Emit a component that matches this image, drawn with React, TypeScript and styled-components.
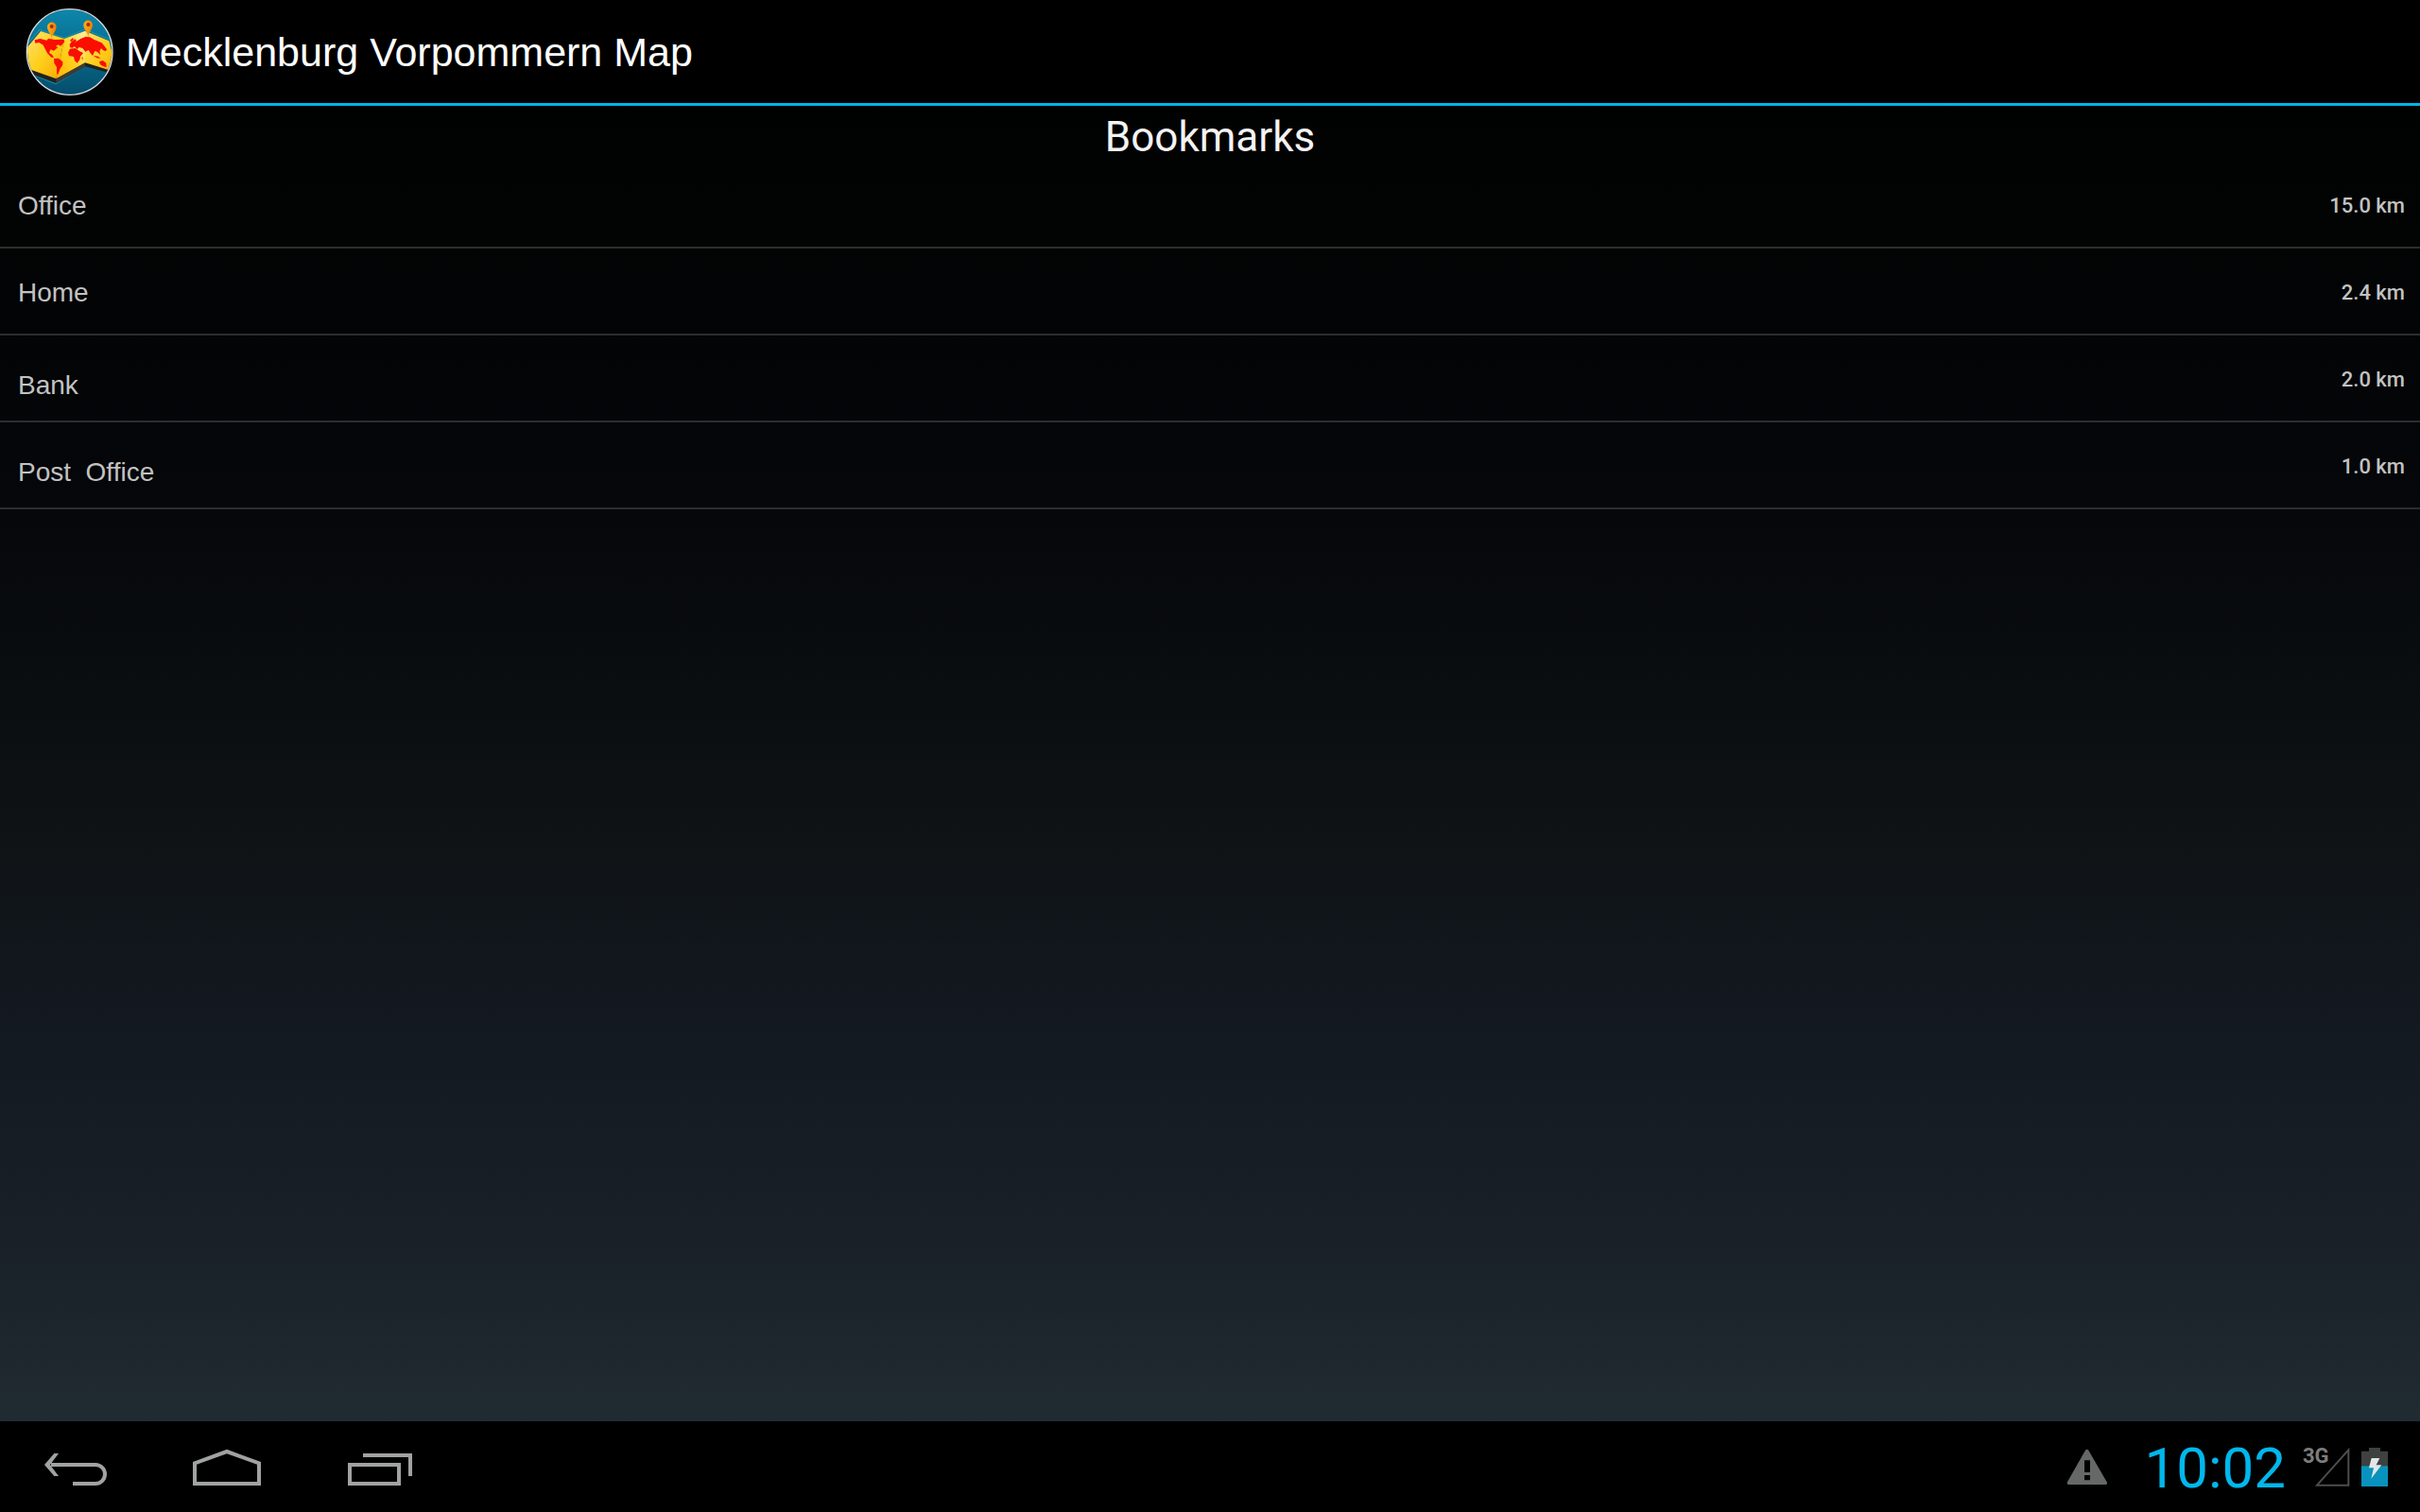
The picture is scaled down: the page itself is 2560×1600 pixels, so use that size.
import React from "react";
import styled, { createGlobalStyle } from "styled-components";

const GlobalStyle = createGlobalStyle`
  * { box-sizing: border-box; }
  body { margin: 0; background: #000; }
  button { border: 0; margin: 0; padding: 0; background: none; color: inherit; font: inherit; cursor: pointer; }
  svg { display: block; flex: none; }
`;

const Screen = styled.div`
  display: flex;
  flex-direction: column;
  min-height: 100vh;
  color: #c2c2c2;
  font-family: Roboto, "Liberation Sans", sans-serif;
  background: linear-gradient(
    #000000 0%, #020303 15%, #040609 31%, #0e1214 54%,
    #12171e 64%, #181f26 80%, #212b32 94%
  );
`;

const ActionBar = styled.header`
  display: flex;
  align-items: center;
  gap: 12px;
  height: 112px;
  padding: 0 27px;
  background: #000;
  border-bottom: 3px solid #00b4ea;
`;

const AppTitle = styled.h1`
  margin: 0;
  color: #fff;
  font: 400 43px/52px "Liberation Sans", Arial, sans-serif;
`;

const Content = styled.main`
  flex: 1;
`;

const Heading = styled.h2`
  margin: 0;
  padding-top: 7px;
  color: #f3f3f3;
  font-size: 44px;
  font-weight: 400;
  line-height: 52px;
  text-align: center;
`;

const List = styled.ul`
  margin: 0;
  padding: 0;
  list-style: none;
`;

const Row = styled.button`
  display: flex;
  justify-content: space-between;
  align-items: center;
  width: 100%;
  height: 92px;
  padding: 0 16px 0 19px;
  border-bottom: 2px solid #2c2d2e;
`;

const Name = styled.span<{ $low: boolean }>`
  padding-top: ${(p) => (p.$low ? 16 : 4)}px;
  font: 400 28px/32px "Liberation Sans", Arial, sans-serif;
  white-space: pre;
`;

const Distance = styled.span`
  padding-top: 4px;
  font-size: 22px;
  font-weight: 500;
  line-height: 26px;
`;

const SystemBar = styled.footer`
  display: flex;
  justify-content: space-between;
  align-items: center;
  height: 96px;
  padding-right: 34px;
  background: #000;
`;

const Group = styled.div`
  display: flex;
  align-items: center;
`;

const NavButton = styled.button`
  width: 160px;
  height: 96px;
`;

const Clock = styled.time`
  margin: 0 18px 0 40px;
  padding-top: 4px;
  color: #00b7ec;
  font-size: 60px;
  line-height: 72px;
`;

const Signal = styled.div`
  position: relative;
  display: flex;
  justify-content: flex-end;
  width: 50px;
  margin-right: 12px;
`;

const Network = styled.span`
  position: absolute;
  left: 0;
  top: 0;
  color: #7d7d7d;
  font-size: 22px;
  font-weight: 700;
  line-height: 20px;
`;

const bookmarks = [
  { name: "Office", distance: "15.0 km", low: false },
  { name: "Home", distance: "2.4 km", low: false },
  { name: "Bank", distance: "2.0 km", low: true },
  { name: "Post  Office", distance: "1.0 km", low: true },
];

const Logo = () => (
  <svg width="94" height="94" viewBox="78 25 282 282" aria-hidden="true">
    <defs>
      <linearGradient id="sea" x1="0" y1="0" x2="0" y2="1">
        <stop offset="0" stopColor="#0d87ab" />
        <stop offset=".5" stopColor="#086a8c" />
        <stop offset="1" stopColor="#044d6c" />
      </linearGradient>
      <linearGradient id="foldA" x1="0" y1="0" x2="1" y2="1">
        <stop offset="0" stopColor="#ffe27a" />
        <stop offset=".5" stopColor="#ffd01c" />
        <stop offset="1" stopColor="#f5a800" />
      </linearGradient>
      <linearGradient id="foldB" x1="0" y1="1" x2="1" y2="0">
        <stop offset="0" stopColor="#ffb400" />
        <stop offset=".5" stopColor="#ffd21e" />
        <stop offset="1" stopColor="#fff0a8" />
      </linearGradient>
      <linearGradient id="pin" x1="0" y1="0" x2="1" y2="0">
        <stop offset="0" stopColor="#ffb01c" />
        <stop offset="1" stopColor="#ee7d00" />
      </linearGradient>
      <clipPath id="disc"><circle cx="218" cy="166" r="134" /></clipPath>
    </defs>
    <circle cx="218" cy="166" r="135" fill="url(#sea)" />
    <g clipPath="url(#disc)">
      <path d="M76 152 123 97 201 122 267 96 345 128 372 236 267 208 174 266 76 226Z" fill="#16353f" stroke="#18a3bd" strokeWidth="6" strokeOpacity=".6" />
      <path d="M76 214 175 252V265L76 228ZM175 252 267 200V212L175 265ZM267 200 360 225V237L267 212Z" fill="#22211f" />
      <path d="M175 252 267 200V212L175 265Z" fill="#3d3a36" />
      <path d="M76 160 126 100 201 124 175 251 76 216Z" fill="url(#foldA)" />
      <path d="M201 124 267 99V200L175 251Z" fill="url(#foldB)" />
      <path d="M267 99 343 131 370 232 267 200Z" fill="url(#foldA)" />
      <path d="M107 128 124 124 146 129 150 123 171 127 199 126 202 134 190 147 181 143 174 148 181 151 168 162 158 158 153 169 162 174 168 184 160 183 147 170 141 158 134 144 121 136 109 138Z" fill="#fb0d00" />
      <path d="M168 187 182 186 196 197 196 207 188 219 181 237 177 235 177 214 169 201Z" fill="#fb0d00" />
      <path d="M218 142 225 132 235 125 240 131 233 137 244 130 253 124 268 118 282 119 296 127 320 137 336 157 333 164 323 160 318 154 313 164 316 175 305 165 298 163 291 178 283 168 278 160 268 165 259 154 248 151 242 157 233 148 227 153 219 151Z" fill="#fb0d00" />
      <path d="M219 156 236 154 250 164 261 169 252 180 250 191 242 201 234 194 231 181 216 178 213 168Z" fill="#fb0d00" />
      <path d="M312 197 323 193 334 201 335 215 324 211 315 206ZM293 177 308 180 317 187 304 185ZM219 130 227 122 231 125 224 133ZM256 185 260 181 259 192Z" fill="#fb0d00" />
    </g>
    <path d="M161 124C158 106 147 100 147 86a14 14 0 0 1 29 0C176 100 164 106 161 124Z" fill="url(#pin)" />
    <circle cx="161" cy="85" r="6" fill="#a52b10" />
    <path d="M277 118C274 100 262 94 262 80a14 14 0 0 1 29 0C291 94 280 100 277 118Z" fill="url(#pin)" />
    <circle cx="277" cy="79" r="6" fill="#a52b10" />
    <circle cx="218" cy="166" r="136" fill="none" stroke="#dcdde2" strokeWidth="4" />
  </svg>
);

const navIcons = [
  {
    label: "Back",
    viewBox: "0 42 480 288",
    art: (
      <>
        <path d="M162 180H303a29.5 29.5 0 0 1 0 60H231" />
        <path d="M186 144H172L141 180 172 216H186L159 180Z" fill="#a0a3a1" stroke="none" />
      </>
    ),
  },
  {
    label: "Home",
    viewBox: "480 42 480 288",
    art: <path d="M618 240V175L720 138 822 175V240Z" />,
  },
  {
    label: "Recent apps",
    viewBox: "960 42 480 288",
    art: <path d="M1110 180H1266V240H1110ZM1152 150H1302V216" />,
  },
];

export default function App() {
  return (
    <>
      <GlobalStyle />
      <Screen>
        <ActionBar>
          <Logo />
          <AppTitle>Mecklenburg Vorpommern Map</AppTitle>
        </ActionBar>
        <Content>
          <Heading>Bookmarks</Heading>
          <List>
            {bookmarks.map((b) => (
              <li key={b.name}>
                <Row type="button">
                  <Name $low={b.low}>{b.name}</Name>
                  <Distance>{b.distance}</Distance>
                </Row>
              </li>
            ))}
          </List>
        </Content>
        <SystemBar>
          <Group as="nav">
            {navIcons.map((icon) => (
              <NavButton key={icon.label} type="button" aria-label={icon.label}>
                <svg width="160" height="96" viewBox={icon.viewBox} fill="none" stroke="#a0a3a1" strokeWidth="12">
                  {icon.art}
                </svg>
              </NavButton>
            ))}
          </Group>
          <Group>
            <svg width="44" height="40" viewBox="78 129 132 120" aria-hidden="true">
              <path d="M141 137Q146 131 151 137L210 239Q211 246 205 246H88Q82 246 83 239Z" fill="#666867" />
              <path d="M138 169H156V207H138ZM138 216H156V232H138Z" fill="#000" />
            </svg>
            <Clock>10:02</Clock>
            <Signal>
              <svg width="38" height="42" viewBox="84 93 114 126" aria-hidden="true">
                <path d="M93 215 193 103V215Z" fill="none" stroke="#4d4d4d" strokeWidth="6" />
              </svg>
              <Network>3G</Network>
            </Signal>
            <svg width="28" height="42" viewBox="234 93 84 126" aria-hidden="true">
              <path d="M234 107H258V96H294V107H318V219H234Z" fill="#3f4040" />
              <path d="M234 154H318V219H234Z" fill="#0793bd" />
              <path d="M266 129H292L281 151H298L265 194 273 160H258Z" fill="#e2e6e8" />
            </svg>
          </Group>
        </SystemBar>
      </Screen>
    </>
  );
}
